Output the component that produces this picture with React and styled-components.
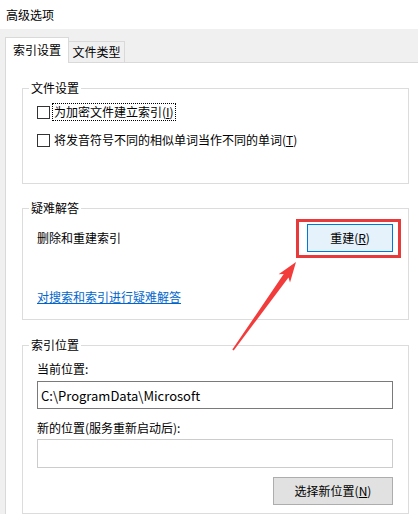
import React from 'react'
import styled, { createGlobalStyle } from 'styled-components'

const Global = createGlobalStyle`
    html, body {
        margin: 0;
        padding: 0;
        background: #f0f0f0;
    }
    body {
        font-family: "Noto Sans CJK SC", "Microsoft YaHei", sans-serif;
        font-size: 12px;
        color: #000;
    }
`

const Window = styled.div`
    position: relative;
    width: 418px;
    height: 514px;
    overflow: hidden;
    background: #f0f0f0;
    display: flex;
    flex-direction: column;
`
const TitleBar = styled.div`
    height: 29px;
    flex: none;
    background: #fff;
    display: flex;
    align-items: center;
    padding-left: 6px;
    line-height: 16px;
`
const TabStrip = styled.div`
    height: 33px;
    flex: none;
    display: flex;
    align-items: flex-end;
    padding-left: 5px;
`
const Tab = styled.div`
    box-sizing: border-box;
    display: flex;
    align-items: center;
    justify-content: center;
    line-height: 16px;
    border: 1px solid #d9d9d9;
    border-bottom: none;
    ${(p) =>
        p.active
            ? `
        position: relative;
        z-index: 1;
        width: 64px;
        height: 26px;
        margin-bottom: -1px;
        background: #fff;
        padding-bottom: 2px;
    `
            : `
        width: 56px;
        height: 21px;
        border-left: none;
        background: #f0f0f0;
    `}
`
const Panel = styled.div`
    flex: 1;
    margin-left: 5px;
    background: #fff;
    border-top: 1px solid #d9d9d9;
    border-left: 1px solid #d9d9d9;
    padding: 25px 9px 0 16px;
    display: flex;
    flex-direction: column;
`
const Group = styled.div`
    position: relative;
    box-sizing: border-box;
    border: 1px solid #dcdcdc;
    margin-top: ${(p) => p.gap || 0}px;
    height: ${(p) => (p.h ? `${p.h}px` : 'auto')};
    flex: ${(p) => (p.h ? 'none' : '1')};
    padding: 15px 15px 0 14px;
    display: flex;
    flex-direction: column;
`
const Legend = styled.span`
    position: absolute;
    top: -9px;
    left: 6px;
    padding: 0 2px;
    background: #fff;
    line-height: 16px;
`
const CheckRow = styled.label`
    display: flex;
    align-items: center;
    height: 16px;
    gap: 3px;
    margin-bottom: 12px;
    white-space: nowrap;
`
const Box = styled.span`
    box-sizing: border-box;
    width: 13px;
    height: 13px;
    border: 1px solid #333;
    background: #fff;
    flex: none;
`
const CheckText = styled.span`
    line-height: 16px;
    padding: 0 1px;
    outline: ${(p) => (p.focused ? '1px dotted #000' : 'none')};
`
const Text = styled.div`
    line-height: 16px;
    white-space: nowrap;
`
const RepairRow = styled.div`
    display: flex;
    align-items: center;
    justify-content: space-between;
    height: 28px;
`
const Highlight = styled.div`
    position: relative;
    &::after {
        content: '';
        position: absolute;
        left: -11px;
        right: -8px;
        top: -5px;
        bottom: -6px;
        border: 3px solid #e8393b;
        pointer-events: none;
    }
`
const Button = styled.button`
    box-sizing: border-box;
    width: ${(p) => p.w}px;
    height: 28px;
    font: inherit;
    color: #000;
    line-height: 16px;
    padding: 0;
    background: ${(p) => (p.primary ? '#e5f1fb' : '#e1e1e1')};
    border: 1px solid ${(p) => (p.primary ? '#0078d7' : '#adadad')};
`
const Link = styled.a`
    display: block;
    margin-top: 37px;
    line-height: 16px;
    color: #0066cc;
    text-decoration: underline;
    white-space: nowrap;
`
const FieldLabel = styled.div`
    line-height: 16px;
    margin-top: ${(p) => p.gap || 0}px;
`
const Input = styled.div`
    box-sizing: border-box;
    margin-top: ${(p) => p.gap}px;
    height: ${(p) => p.h}px;
    border: 1px solid ${(p) => (p.disabled ? '#cccccc' : '#7a7a7a')};
    background: #fff;
    display: flex;
    align-items: center;
    padding-left: 3px;
    font-size: 13px;
    white-space: nowrap;
`
const ButtonRow = styled.div`
    display: flex;
    justify-content: flex-end;
    margin-top: 9px;
`
const Arrow = styled.svg`
    position: absolute;
    left: 0;
    top: 0;
    pointer-events: none;
`

export default function App() {
    return (
        <Window>
            <Global />
            <TitleBar>高级选项</TitleBar>
            <TabStrip>
                <Tab active>索引设置</Tab>
                <Tab>文件类型</Tab>
            </TabStrip>
            <Panel>
                <Group h={96}>
                    <Legend>文件设置</Legend>
                    <CheckRow>
                        <Box />
                        <CheckText focused>
                            为加密文件建立索引(<u>I</u>)
                        </CheckText>
                    </CheckRow>
                    <CheckRow>
                        <Box />
                        <CheckText>
                            将发音符号不同的相似单词当作不同的单词(<u>T</u>)
                        </CheckText>
                    </CheckRow>
                </Group>
                <Group h={112} gap={24}>
                    <Legend>疑难解答</Legend>
                    <RepairRow>
                        <Text>删除和重建索引</Text>
                        <Highlight>
                            <Button primary w={86}>
                                重建(<u>R</u>)
                            </Button>
                        </Highlight>
                    </RepairRow>
                    <Link href="#">对搜索和索引进行疑难解答</Link>
                </Group>
                <Group gap={25}>
                    <Legend>索引位置</Legend>
                    <FieldLabel>当前位置:</FieldLabel>
                    <Input gap={4} h={28}>
                        C:\ProgramData\Microsoft
                    </Input>
                    <FieldLabel gap={11}>新的位置(服务重新启动后):</FieldLabel>
                    <Input gap={3} h={29} disabled />
                    <ButtonRow>
                        <Button w={120}>
                            选择新位置(<u>N</u>)
                        </Button>
                    </ButtonRow>
                </Group>
            </Panel>
            <Arrow width="418" height="514" viewBox="0 0 418 514">
                <polygon
                    points="232.3,349.5 283.7,274.1 278.6,274.2 296,262 290,282.4 288.5,277.5 233.7,350.5"
                    fill="#f23c3c"
                />
            </Arrow>
        </Window>
    )
}
